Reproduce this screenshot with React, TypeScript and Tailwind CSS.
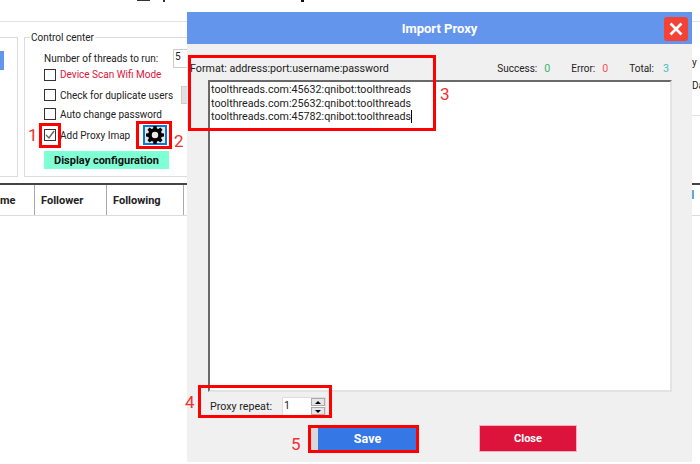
import React from "react";

const F = "font-['Roboto',sans-serif]";

function Box({ checked = false }: { checked?: boolean }) {
  return (
    <span className="w-[12px] h-[12px] border border-[#333] bg-white flex items-center justify-center shrink-0">
      {checked && (
        <svg width="10" height="10" viewBox="0 0 10 10" fill="none" stroke="#666" strokeWidth="1.4">
          <path d="M1 5l3 3 5-7" />
        </svg>
      )}
    </span>
  );
}

function Row({ label, red, checked, h }: { label: string; red?: boolean; checked?: boolean; h: string }) {
  return (
    <div className={`flex items-center gap-[4px] ${h}`}>
      <Box checked={checked} />
      <span className={red ? "text-[#dc143c]" : "text-[#222]"}>{label}</span>
    </div>
  );
}

function Mark({ className }: { className: string }) {
  return <div className={`absolute border-[3px] border-[#f00] ${className}`} />;
}

function Num({ className, n }: { className: string; n: string }) {
  return <div className={`absolute text-[17px] leading-[20px] text-[#f03030] ${className}`}>{n}</div>;
}

export default function App() {
  return (
    <div className={`relative w-[700px] h-[464px] overflow-hidden bg-white text-[10px] leading-[13px] text-[#222] ${F}`}>
      {/* Background application */}
      <div className="relative h-[22px] border-b border-[#e3e3e3]">
        <div className="absolute left-[137px] top-0 w-[13px] h-px bg-[#333]" />
        <div className="absolute left-[163px] top-0 w-[2px] h-[2px] bg-[#333]" />
        <div className="absolute left-[301px] top-0 w-[3px] h-[2px] bg-[#111]" />
      </div>
      <div className="flex h-[161px] pt-[15px]">
        <div className="w-[18px] h-[140px] border border-l-0 border-[#dcdcdc] pt-[13px]">
          <div className="w-[4px] h-[19px] bg-[#6495ed]" />
        </div>
        <div className="relative ml-[6px] w-[250px] h-[140px] border border-[#dcdcdc] pl-[19px] pt-[13px]">
          <div className="absolute left-[5px] top-[-7px] bg-white px-px">Control center</div>
          <div className="flex items-center h-[14px]">
            <span className="w-[129px]">Number of threads to run:</span>
            <span className="w-[30px] h-[19px] border border-[#ccc] bg-white pl-px">5</span>
          </div>
          <div className="flex flex-col">
            <Row label="Device Scan Wifi Mode" red h="h-[19px]" />
            <div className="flex items-center h-[22px]">
              <div className="w-[137px]">
                <Row label="Check for duplicate users" h="h-[22px]" />
              </div>
              <div className="w-[20px] h-[18px] bg-[#e1e1e1] border border-[#ccc]" />
            </div>
            <Row label="Auto change password" h="h-[16px]" />
            <div className="flex items-center h-[26px]">
              <div className="w-[99px]">
                <Row label="Add Proxy Imap" checked h="h-[26px]" />
              </div>
              <div className="w-[24px] h-[20px] border-2 border-[#0a78d7] bg-[#e8e8e8] flex items-center justify-center">
                <svg width="18" height="18" viewBox="0 0 24 24" fill="#000">
                  <path
                    fillRule="evenodd"
                    d="M10 0h4l.6 3.2 1.9.8L19.2 2.1 22 4.9l-1.9 2.7.8 1.9L24 10v4l-3.1.5-.8 1.9 1.9 2.7-2.8 2.8-2.7-1.9-1.9.8L14 24h-4l-.6-3.2-1.9-.8-2.7 1.9L2 19.1l1.9-2.7-.8-1.9L0 14v-4l3.1-.5.8-1.9L2 4.9l2.8-2.8 2.7 1.9 1.9-.8L10 0zm2 7.7a4.3 4.3 0 100 8.6 4.3 4.3 0 000-8.6z"
                  />
                </svg>
              </div>
            </div>
            <div className="mt-[3px] w-[125px] h-[18px] bg-[#7fffd4] flex items-center justify-center font-bold text-[#111] text-[11px]">
              Display configuration
            </div>
          </div>
        </div>
        <div className="ml-auto w-[8px] h-[79px] border-b border-[#e3e3e3] pt-[19px] overflow-hidden whitespace-nowrap text-[#222]">
          <div>y</div>
          <div className="mt-[10px]">Da</div>
        </div>
      </div>
      <div className="relative flex h-[33px] border-t-2 border-[#444] border-b border-b-[#dcdcdc] font-bold text-[#222] text-[11px]">
        <div className="w-[35px] border-r border-[#aaa] flex items-center justify-start">me</div>
        <div className="w-[72px] border-r border-[#aaa] flex items-center pl-[6px]">Follower</div>
        <div className="w-[77px] border-r border-[#aaa] flex items-center pl-[6px]">Following</div>
        <div className="absolute left-[692px] top-[5px] w-[2px] h-[9px] bg-[#6ea3d8]" />
      </div>

      {/* Dialog window */}
      <div className="absolute left-[187px] top-[12px] w-[505px] h-[450px] bg-[#f0f0f0] flex flex-col text-[10.7px]">
        <div className="relative h-[32px] bg-[#6495ed] flex items-center justify-center font-bold text-white text-[13px] shrink-0">
          Import Proxy
          <div className="absolute right-[4px] top-[5px] w-[24px] h-[24px] rounded-[3px] bg-[#f44336] flex items-center justify-center">
            <svg width="14" height="14" viewBox="0 0 14 14" stroke="#fff" strokeWidth="2.6" fill="none">
              <path d="M1.5 1.5l11 11M12.5 1.5l-11 11" />
            </svg>
          </div>
        </div>
        <div className="flex items-center h-[36px] pt-[13px] pl-[3px] pr-[23px] text-[#222]">
          <span>Format: address:port:username:password</span>
          <span className="ml-auto text-[10px]">Success:</span>
          <span className="ml-[7px] text-[#3cb371]">0</span>
          <span className="ml-[21px] text-[10px]">Error:</span>
          <span className="ml-[7px] text-[#ff5050]">0</span>
          <span className="ml-[21px] text-[10px]">Total:</span>
          <span className="ml-[9px] text-[#40c0c0]">3</span>
        </div>
        <div className="ml-[21px] w-[464px] h-[312px] bg-white border-t-2 border-l-2 border-t-[#696969] border-l-[#696969] border-r-2 border-b-2 border-r-[#e3e3e3] border-b-[#e3e3e3] pl-px pt-[1px] leading-[13.5px] text-[#222]">
          <div>toolthreads.com:45632:qnibot:toolthreads</div>
          <div>toolthreads.com:25632:qnibot:toolthreads</div>
          <div className="flex items-center">
            toolthreads.com:45782:qnibot:toolthreads
            <span className="w-px h-[13px] bg-black" />
          </div>
        </div>
        <div className="flex items-center ml-[23px] mt-[5px] h-[19px]">
          <span className="w-[72px]">Proxy repeat:</span>
          <div className="flex h-[19px] w-[44px] bg-white border border-[#ddd]">
            <span className="w-[28px] pl-px pt-px">1</span>
            <div className="flex flex-col gap-px w-[14px] ml-auto">
              <div className="flex-1 bg-[#e6e6e6] border border-[#aaa] flex items-center justify-center">
                <span className="w-0 h-0 border-x-[3px] border-x-transparent border-b-[3px] border-b-black" />
              </div>
              <div className="flex-1 bg-[#e6e6e6] border border-[#aaa] flex items-center justify-center">
                <span className="w-0 h-0 border-x-[3px] border-x-transparent border-t-[3px] border-t-black" />
              </div>
            </div>
          </div>
        </div>
        <div className="flex mt-[9px] items-center">
          <div className="ml-[123px] w-[107px] h-[25px] bg-[#d9d9d9] flex justify-end">
            <div className="w-[99px] h-[25px] bg-[#3578e5] flex items-center justify-center font-bold text-white text-[12.5px]">Save</div>
          </div>
          <div className="ml-[62px] w-[98px] h-[27px] bg-[#dc143c] border border-[#f4b0c0] flex items-center justify-center font-bold text-white text-[11px]">
            Close
          </div>
        </div>
      </div>

      {/* Annotations */}
      <Mark className="left-[39px] top-[123px] w-[22px] h-[25px]" />
      <Mark className="left-[136px] top-[121px] w-[36px] h-[28px]" />
      <Mark className="left-[188px] top-[55px] w-[248px] h-[76px]" />
      <Mark className="left-[198px] top-[385px] w-[134px] h-[33px]" />
      <Mark className="left-[308px] top-[425px] w-[111px] h-[28px]" />
      <Num className="left-[28px] top-[125px]" n="1" />
      <Num className="left-[174px] top-[131px]" n="2" />
      <Num className="left-[440px] top-[84px]" n="3" />
      <Num className="left-[185px] top-[392px]" n="4" />
      <Num className="left-[291px] top-[434px]" n="5" />
    </div>
  );
}
